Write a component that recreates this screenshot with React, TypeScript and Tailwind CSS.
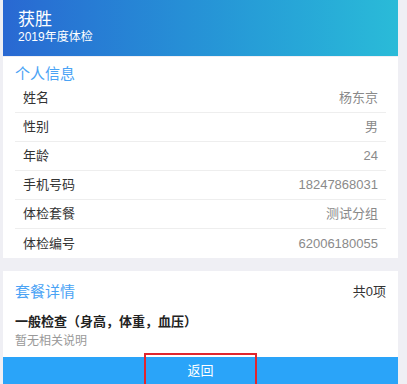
import React from 'react';

const rows = [
  { label: '姓名', value: '杨东京' },
  { label: '性别', value: '男' },
  { label: '年龄', value: '24' },
  { label: '手机号码', value: '18247868031' },
  { label: '体检套餐', value: '测试分组' },
  { label: '体检编号', value: '62006180055' },
];

const App: React.FC = () => {
  return (
    <div
      className="w-[407px] h-[384px] overflow-hidden bg-[#efeff4] pl-[3px] pr-[9px]"
      style={{ fontFamily: '"Liberation Sans", "Noto Sans CJK SC", sans-serif' }}
    >
      {/* HEADER */}
      <div className="h-[56px] bg-gradient-to-r from-[#2968d2] to-[#2abbd8] px-[15px] pt-[10px] text-white">
        <div className="text-[17px] leading-[20px]">获胜</div>
        <div className="text-[12px] leading-[12px] mt-[1px]">2019年度体检</div>
      </div>

      {/* PERSONAL INFO */}
      <div className="bg-white mt-[1px] px-[12px] pt-[7px]">
        <div className="text-[15px] leading-[20px] text-[#4aa3f5]">个人信息</div>
        <div>
          {rows.map((r, i) => (
            <div
              key={r.label}
              className={`h-[29px] flex items-center justify-between px-[8px] text-[13px] ${i < rows.length - 1 ? 'border-b border-[#eeeeee]' : ''}`}
            >
              <span className="text-[#333333]">{r.label}</span>
              <span className="text-[#8a8a8a]">{r.value}</span>
            </div>
          ))}
        </div>
      </div>

      {/* PACKAGE DETAILS */}
      <div className="bg-white mt-[13px]">
        <div className="px-[12px] pt-[11px]">
          <div className="flex items-center justify-between h-[20px]">
            <span className="text-[15px] text-[#4aa3f5]">套餐详情</span>
            <span className="text-[13px] text-[#333333]">共0项</span>
          </div>
          <div className="mt-[11px] text-[13px] font-bold text-[#222222] leading-[18px]">一般检查（身高，体重，血压）</div>
          <div className="mt-[2px] text-[12px] text-[#999999] leading-[16px]">暂无相关说明</div>
        </div>
        <div className="mt-[8px] h-[28px] bg-[#2aa4f9] flex items-center justify-center text-white text-[13px] relative">
          返回
          <div className="absolute left-[141px] top-[-4px] w-[113px] h-[34px] border-2 border-[#e0262e]" />
        </div>
      </div>
    </div>
  );
};

export default App;
